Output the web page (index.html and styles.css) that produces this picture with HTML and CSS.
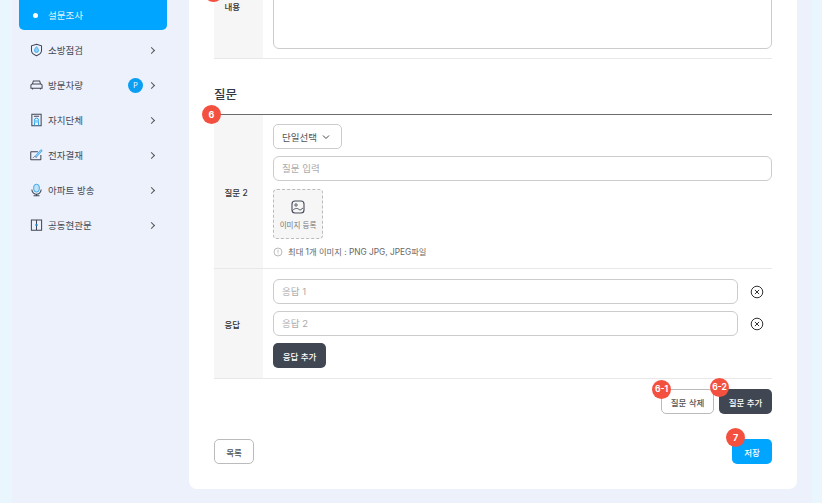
FILE: index.html
```html
<!DOCTYPE html>
<html lang="ko">
<head>
    <meta charset="UTF-8">
    <meta name="viewport" content="width=device-width, initial-scale=1.0">
    <title>설문조사 등록</title>
    <link rel="stylesheet" href="styles.css">
</head>
<body>

<div class="layout">
    <!-- Sidebar menu -->
    <nav class="sidebar">
        <a class="menu-item active"><span class="menu-dot"></span><span class="menu-label">설문조사</span></a>
        <a class="menu-item">
            <svg class="menu-icon" viewBox="0 0 14 14" fill="none"><path d="M7 .8l5.400 1.700v5c0 2.700-2.400 4.500-5.400 5.700-3-1.200-5.400-3-5.400-5.700v-5z" stroke="#3f4654" stroke-width="1.100"/><path d="M7 3.400c1.100 1.500 2.200 2.700 2.200 4a2.200 2.200 0 0 1-4.400 0c0-1.300 1.100-2.500 2.200-4z" fill="#8fd0f7" stroke="#1d9be8" stroke-width=".8"/></svg>
            <span class="menu-label">소방점검</span><span class="menu-arrow"></span>
        </a>
        <a class="menu-item">
            <svg class="menu-icon" viewBox="0 0 14 14" fill="none"><path d="M2.600 6l1-3.400h6.800l1 3.400M1 7.400C1 6.600 1.600 6 2.400 6h9.200c.8 0 1.400.6 1.400 1.400v3H1zM2.800 10.400v1.500M11.200 10.400v1.500" stroke="#3f4654" stroke-width="1.100"/></svg>
            <span class="menu-label">방문차량</span><span class="menu-badge">P</span><span class="menu-arrow"></span>
        </a>
        <a class="menu-item">
            <svg class="menu-icon" viewBox="0 0 14 14" fill="none"><path d="M2 .8h10v12.400H2zM4.200 3h5.600" stroke="#3f4654" stroke-width="1.100"/><path d="M4.800 13V7.200a2.200 2.200 0 0 1 4.400 0V13" stroke="#1d9be8"/><path d="M5 7h4v3H5z" fill="#8fd0f7"/></svg>
            <span class="menu-label">자치단체</span><span class="menu-arrow"></span>
        </a>
        <a class="menu-item">
            <svg class="menu-icon" viewBox="0 0 14 14" fill="none"><path d="M8.500 3.500H1.300a.5.5 0 0 0-.5.500v7.500a.5.5 0 0 0 .5.500h9.900a.5.5 0 0 0 .5-.5V7" stroke="#3f4654" stroke-width="1.100"/><path d="M3 10c1.200-.2 1.600-2 2.600-1.500s0 1.200 1.400 1.100" stroke="#3f4654" stroke-width=".8"/><path d="M5.800 8L11.800 1.200l1.400 1.200L7 9.200z" fill="#8fd0f7" stroke="#1d9be8" stroke-width=".7"/></svg>
            <span class="menu-label">전자결재</span><span class="menu-arrow"></span>
        </a>
        <a class="menu-item">
            <svg class="menu-icon" viewBox="0 0 14 14" fill="none"><rect x="4" y=".8" width="6" height="8.400" rx="3" fill="#bfe2f8" stroke="#1d9be8" stroke-width=".9"/><path d="M2 6.500a5 5 0 0 0 10 0M7 11.500v1.500M3.800 13.200h6.400" stroke="#3f4654" stroke-width="1.100"/></svg>
            <span class="menu-label">아파트 방송</span><span class="menu-arrow"></span>
        </a>
        <a class="menu-item">
            <svg class="menu-icon" viewBox="0 0 14 14" fill="none"><path d="M1.500 1.500h11v11.200h-11zM7 1.500v11.200" stroke="#3f4654" stroke-width="1.100"/><path d="M5.600 7h2.800" stroke="#1d9be8" stroke-width="1.600"/></svg>
            <span class="menu-label">공동현관문</span><span class="menu-arrow"></span>
        </a>
    </nav>

    <!-- Form card -->
    <main class="card">
        <div class="form-row content-row">
            <span class="step step-content"></span>
            <div class="form-head">내용</div>
            <div class="form-body"><div class="textarea"></div></div>
        </div>

        <h3 class="section-title">질문</h3>

        <div class="question-table">
            <span class="step step-question">6</span>
            <div class="form-row">
                <div class="form-head">질문 2</div>
                <div class="form-body question-body">
                    <div class="select">단일선택
                        <svg class="select-arrow" viewBox="0 0 8 8" fill="none"><path d="M1 2.500l3 3 3-3" stroke="#444" stroke-width="1"/></svg>
                    </div>
                    <div class="input">질문 입력</div>
                    <div class="image-upload">
                        <svg class="image-icon" viewBox="0 0 14 14" fill="none"><rect x="1" y="1" width="12" height="12" rx="3" stroke="#444a55" stroke-width="1.100"/><circle cx="5" cy="5" r="1.200" stroke="#444a55" stroke-width=".9"/><path d="M1.500 10.500c2.500-2.500 5-2.800 7.500-.3l3-2.200" stroke="#444a55" stroke-width=".9"/></svg>
                        <span>이미지 등록</span>
                    </div>
                    <div class="hint">
                        <svg class="hint-icon" viewBox="0 0 10 10" fill="none"><circle cx="5" cy="5" r="4" stroke="#aaa" stroke-width=".8"/><path d="M5 2.800v2.900" stroke="#aaa" stroke-width=".8"/><path d="M5 6.600v.8" stroke="#aaa" stroke-width=".8"/></svg>
                        최대 1개 이미지 : PNG JPG, JPEG파일
                    </div>
                </div>
            </div>
            <div class="form-row">
                <div class="form-head">응답</div>
                <div class="form-body answer-body">
                    <div class="answer">
                        <div class="input">응답 1</div>
                        <svg class="remove-icon" viewBox="0 0 14 14" fill="none"><circle cx="7" cy="7" r="5.800" stroke="#333"/><path d="M4.900 4.900l4.200 4.200M9.100 4.900l-4.200 4.200" stroke="#333"/></svg>
                    </div>
                    <div class="answer">
                        <div class="input">응답 2</div>
                        <svg class="remove-icon" viewBox="0 0 14 14" fill="none"><circle cx="7" cy="7" r="5.800" stroke="#333"/><path d="M4.900 4.900l4.200 4.200M9.100 4.900l-4.200 4.200" stroke="#333"/></svg>
                    </div>
                    <button type="button" class="btn btn-dark">응답 추가</button>
                </div>
            </div>
        </div>

        <div class="question-actions">
            <div class="btn-wrap"><span class="step step-action">6-1</span><button type="button" class="btn btn-line">질문 삭제</button></div>
            <div class="btn-wrap"><span class="step step-action step-raised">6-2</span><button type="button" class="btn btn-dark">질문 추가</button></div>
        </div>

        <div class="page-actions">
            <button type="button" class="btn btn-line btn-small">목록</button>
            <div class="btn-wrap"><span class="step step-save">7</span><button type="button" class="btn btn-blue btn-small">저장</button></div>
        </div>
    </main>
</div>

</body>
</html>
```

FILE: styles.css
```css
body {
    margin: 0;
    height: 503px;
    overflow: hidden;
    padding: 0 10px 0 12px;
    box-sizing: border-box;
    background-color: #e9f6fe;
    font-family: Inter, "Noto Sans CJK KR", sans-serif;
    color: #333;
}

.layout {
    display: flex;
    height: 503px;
    padding: 0 15px 14px 0;
    box-sizing: border-box;
    background-color: #edf1fb;
}

/* Sidebar */
.sidebar {
    width: 155px;
    margin-right: 22px;
    padding-left: 7px;
    box-sizing: border-box;
    flex-shrink: 0;
    display: flex;
    flex-direction: column;
    gap: 5px;
}

.menu-item {
    height: 30px;
    display: flex;
    align-items: center;
    padding: 0 12px 0 10.5px;
    font-size: 9.5px;
    color: #444a55;
}

.menu-item.active {
    background-color: #00a5ff;
    border-radius: 0 0 5px 5px;
    color: #e4f5ff;
}

.menu-dot {
    width: 5px;
    height: 5px;
    margin: 0 10px 0 3.500px;
    border-radius: 50%;
    background-color: white;
}

.menu-icon {
    width: 13px;
    height: 14px;
    margin-right: 5.500px;
    flex-shrink: 0;
}

.menu-label {
    flex: 1;
}

.menu-badge {
    width: 15px;
    height: 15px;
    margin-right: 1px;
    border-radius: 50%;
    background-color: #0a9ff2;
    color: white;
    font-size: 7px;
    line-height: 15px;
    text-align: center;
}

.menu-arrow {
    width: 4px;
    height: 4px;
    margin: 0 1px 0 5px;
    border-top: 1px solid #555;
    border-right: 1px solid #555;
    transform: rotate(45deg);
}

/* Card */
.card {
    flex: 1;
    margin-top: -46px;
    padding: 0 25px;
    background-color: white;
    border-radius: 8px;
}

.form-row {
    position: relative;
    display: flex;
    border-bottom: 1px solid #e8e8e8;
}

.form-head {
    width: 49px;
    flex-shrink: 0;
    display: flex;
    align-items: center;
    padding-left: 10.5px;
    box-sizing: border-box;
    background-color: #f6f6f7;
    font-size: 8.5px;
    font-weight: 500;
    color: #333;
}

.form-body {
    flex: 1;
    min-width: 0;
    padding: 9px 0 9px 10px;
}

.textarea {
    height: 86px;
    border: 1px solid #ccc;
    border-radius: 6px;
    box-sizing: border-box;
}

.content-row {
    height: 105px;
    box-sizing: border-box;
}

.content-row .textarea {
    height: 95px;
    margin-top: -9px;
}

.section-title {
    margin: 24px 0 0;
    height: 31px;
    font-size: 12.5px;
    line-height: 23px;
    font-weight: 500;
    color: #333a45;
}

.question-table {
    position: relative;
    border-top: 1px solid #6c6c70;
}

.question-body {
    height: 153px;
    box-sizing: border-box;
    display: flex;
    flex-direction: column;
    align-items: flex-start;
}

.select {
    width: 69px;
    height: 25px;
    display: flex;
    align-items: center;
    gap: 5px;
    padding-left: 8px;
    box-sizing: border-box;
    border: 1px solid #ccc;
    border-radius: 5px;
    font-size: 9.5px;
    color: #555;
}

.select-arrow {
    width: 8px;
    height: 8px;
}

.input {
    width: 100%;
    height: 25px;
    padding-left: 8px;
    box-sizing: border-box;
    border: 1px solid #ccc;
    border-radius: 6px;
    font-size: 9.5px;
    line-height: 23px;
    color: #aaa;
}

.question-body .input {
    margin-top: 7px;
}

.image-upload {
    width: 50px;
    height: 50px;
    margin-top: 8px;
    padding-top: 2px;
    display: flex;
    flex-direction: column;
    align-items: center;
    justify-content: center;
    gap: 5px;
    box-sizing: border-box;
    border: 1px dashed #bbb;
    border-radius: 4px;
    background-color: #f6f6f7;
    font-size: 7.5px;
    color: #777;
}

.image-icon {
    width: 14px;
    height: 14px;
}

.hint {
    margin-top: 7px;
    display: flex;
    align-items: center;
    gap: 5px;
    font-size: 8.3px;
    line-height: 12px;
    color: #666;
}

.hint-icon {
    width: 10px;
    height: 10px;
}

.answer-body {
    padding: 10px 0 10px 10px;
}

.answer {
    display: flex;
    align-items: center;
    margin-bottom: 7px;
    height: 25px;
}

.answer .input {
    width: 465px;
    flex-shrink: 0;
}

.answer + .btn {
    margin-top: 2px;
}

.remove-icon {
    width: 14px;
    height: 14px;
    margin-left: 12px;
}

/* Buttons */
.btn {
    display: block;
    width: 53px;
    height: 25px;
    padding: 0;
    box-sizing: border-box;
    border: 1px solid transparent;
    border-radius: 5px;
    font-family: inherit;
    font-size: 8.5px;
    font-weight: 500;
}

.btn-dark {
    background-color: #414653;
    color: white;
}

.btn-line {
    background-color: white;
    border-color: #bbb;
    color: #555;
}

.btn-blue {
    background-color: #00a5ff;
    color: white;
}

.btn-small {
    width: 40px;
}

.btn-wrap {
    position: relative;
}

.question-actions {
    display: flex;
    justify-content: flex-end;
    gap: 5px;
    margin-top: 10px;
}

.page-actions {
    display: flex;
    justify-content: space-between;
    margin-top: 25px;
}

/* Red markers */
.step {
    position: absolute;
    height: 19px;
    min-width: 19px;
    box-sizing: border-box;
    border-radius: 10px;
    background-color: #f4503f;
    color: white;
    font-size: 9px;
    font-weight: 700;
    line-height: 19px;
    text-align: center;
    z-index: 1;
}

.step-content {
    left: -10px;
    top: 29px;
}

.step-question {
    left: -12px;
    top: -10px;
}

.step-action {
    left: -9px;
    top: -9px;
    font-size: 8.5px;
}

.step-raised {
    top: -11px;
}

.step-save {
    left: -6px;
    top: -11px;
}
```
